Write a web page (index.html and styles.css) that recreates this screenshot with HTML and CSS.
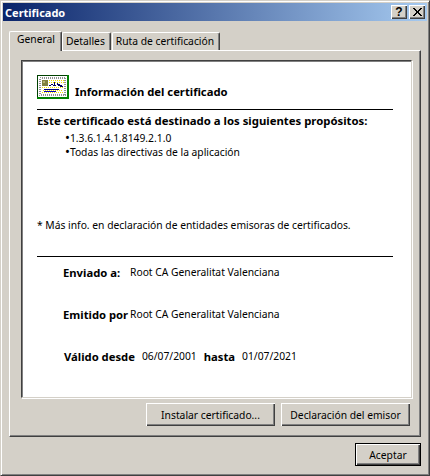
FILE: index.html
```html
<!DOCTYPE html>
<html lang="es">

<head>
    <meta charset="UTF-8">
    <meta name="viewport" content="width=device-width, initial-scale=1.0">
    <title>Certificado</title>
    <link rel="stylesheet" href="styles.css">
</head>

<body>
    <div class="window">
        <div class="titlebar">
            <span class="title">Certificado</span>
            <div class="caption-btns">
                <button class="caption help">?</button>
                <button class="caption close">
                    <svg width="9" height="8" viewBox="0 0 9 8" shape-rendering="crispEdges">
                        <path d="M0 0h2v1h1v1h1v1h1V2h1V1h1V0h2v1H8v1H7v1H6v2h1v1h1v1h1v1H7V7H6V6H5V5H4v1H3v1H2v1H0V7h1V6h1V5h1V3H2V2H1V1H0z" fill="#000"/>
                    </svg>
                </button>
            </div>
        </div>

        <div class="tabs">
            <div class="tab active">General</div>
            <div class="tab">Detalles</div>
            <div class="tab">Ruta de certificación</div>
        </div>

        <div class="panel">
            <div class="cert-box">
                <div class="cert-head">
                    <svg class="cert-icon" width="32" height="24" viewBox="0 0 32 24" shape-rendering="crispEdges">
                        <rect width="32" height="24" fill="#008000"/>
                        <rect width="30" height="1" fill="#004000"/>
                        <rect width="1" height="22" fill="#004000"/>
                        <rect x="1" y="1" width="29" height="21" fill="#fff"/>
                        <rect x="2.5" y="2.5" width="26" height="18" fill="none" stroke="#909090" stroke-dasharray="1 1"/>
                        <rect x="3.5" y="3.5" width="24" height="16" fill="none" stroke="#909090" stroke-dasharray="1 1" stroke-dashoffset="1"/>
                        <path d="M12 5.5h15M5 12.5h22M6 15.5h20M5 17.5h22M12 7.5h15" stroke="#f0e000" stroke-dasharray="1 1" fill="none"/>
                        <rect x="5" y="5" width="6" height="6" fill="#808040"/>
                        <rect x="6" y="6" width="2" height="2" fill="#b0b070"/>
                        <path d="M12 10h2V9h2v1h1V7h1v3h2V8h1v1h2v1h2v1h1v1h-3v-1h-2v-1h-2v1h-3v-1h-2v1h-2z" fill="#000060"/>
                        <rect x="7" y="14" width="15" height="1" fill="#000080"/>
                        <rect x="7" y="16" width="12" height="1" fill="#0000c0"/>
                    </svg>
                    <span class="bold">Información del certificado</span>
                </div>
                <div class="rule"></div>
                <div class="bold purpose-title">Este certificado está destinado a los siguientes propósitos:</div>
                <ul class="purposes">
                    <li>1.3.6.1.4.1.8149.2.1.0</li>
                    <li>Todas las directivas de la aplicación</li>
                </ul>
                <p class="note">* Más info. en declaración de entidades emisoras de certificados.</p>
                <div class="rule"></div>
                <div class="field"><span class="bold label">Enviado a:</span><span>Root CA Generalitat Valenciana</span></div>
                <div class="field"><span class="bold label">Emitido por</span><span>Root CA Generalitat Valenciana</span></div>
                <div class="field validity">
                    <span class="bold">Válido desde</span><span>06/07/2001</span><span class="bold">hasta</span><span>01/07/2021</span>
                </div>
            </div>
            <div class="panel-btns">
                <button class="btn wide">Instalar certificado...</button>
                <button class="btn wide">Declaración del emisor</button>
            </div>
        </div>

        <div class="footer">
            <button class="btn default">Aceptar</button>
        </div>
    </div>
</body>

</html>
```

FILE: styles.css
```css
* {
    box-sizing: border-box;
    padding: 0;
    margin: 0;
}

html,
body {
    height: 100%;
}

body {
    font-family: "Noto Sans", sans-serif;
    font-size: 10.3px;
    color: #000;
    background: #d4d0c8;
}

button {
    font: inherit;
    color: #000;
    background: #d4d0c8;
    border: none;
}

.bold {
    font-weight: bold;
    font-size: 11.25px;
}

.window {
    width: 430px;
    height: 476px;
    padding: 2px;
    background: #d4d0c8;
    border: 1px solid;
    border-color: #d4d0c8 #404040 #404040 #d4d0c8;
    box-shadow: inset 1px 1px 0 #fff, inset -1px -1px 0 #808080;
}

.titlebar {
    height: 18px;
    display: flex;
    align-items: center;
    justify-content: space-between;
    padding: 0 2px;
    background: linear-gradient(to right, #0a246a, #a6caf0);
}

.title {
    color: #fff;
    font-weight: bold;
    font-size: 11px;
}

.caption-btns {
    display: flex;
    gap: 2px;
}

.caption {
    width: 16px;
    height: 14px;
    display: flex;
    align-items: center;
    justify-content: center;
    font-family: "Liberation Sans", sans-serif;
    font-weight: bold;
    font-size: 12px;
    box-shadow: inset 1px 1px 0 #fff, inset -1px -1px 0 #404040, inset -2px -2px 0 #808080;
}

.tabs {
    display: flex;
    align-items: flex-end;
    height: 29px;
    padding-left: 6px;
}

.tab {
    height: 18px;
    line-height: 17px;
    padding: 0 5px 0 3px;
    margin-right: 1px;
    white-space: nowrap;
    border-top: 1px solid #fff;
    border-left: 1px solid #fff;
    border-right: 1px solid #404040;
    border-radius: 2px 2px 0 0;
    box-shadow: inset -1px 0 0 #808080;
}

.tab.active {
    height: 20px;
    line-height: 15px;
    padding: 0 6px 0 7px;
    margin-right: 0;
    margin-bottom: -1px;
    position: relative;
    z-index: 1;
    background: #d4d0c8;
}

.panel {
    width: 412px;
    height: 387px;
    margin-left: 6px;
    padding: 9px 10px 0 11px;
    border: 1px solid;
    border-color: #fff #404040 #404040 #fff;
    box-shadow: inset -1px -1px 0 #808080;
}

.cert-box {
    width: 391px;
    height: 338px;
    padding: 14px 18px 0 15px;
    background: #fff;
    border: 1px solid;
    border-color: #404040 #d4d0c8 #d4d0c8 #404040;
    box-shadow: inset 1px 1px 0 #808080, 1px 1px 0 #fff;
}

.cert-head {
    display: flex;
    align-items: flex-end;
    gap: 6px;
    height: 24px;
    margin-bottom: 10px;
}

.rule {
    height: 1px;
    background: #000;
}

.purpose-title {
    margin-top: 4px;
    line-height: 13px;
    font-size: 11.35px;
}

.purposes {
    list-style: none;
    margin-top: 4px;
    padding-left: 28px;
    line-height: 14px;
}

.purposes li::before {
    content: "•";
    font-size: 13px;
    line-height: 0;
}

.note {
    margin-top: 60px;
    line-height: 13px;
}

.note + .rule {
    margin-top: 24px;
}

.field {
    display: flex;
    margin-left: 26px;
    line-height: 13px;
    margin-top: 9px;
    margin-bottom: 29px;
}

.label {
    width: 67px;
}

.validity {
    margin-left: 27px;
    gap: 7px;
}

.panel-btns {
    display: flex;
    justify-content: flex-end;
    gap: 6px;
    margin-top: 5px;
}

.btn {
    height: 23px;
    box-shadow: inset 1px 1px 0 #fff, inset -1px -1px 0 #404040, inset -2px -2px 0 #808080;
}

.wide {
    width: 129px;
}

.footer {
    display: flex;
    justify-content: flex-end;
    margin-top: 6px;
    padding-right: 6px;
}

.default {
    width: 66px;
    height: 23px;
    border: 1px solid #000;
    box-shadow: inset 1px 1px 0 #fff, inset -1px -1px 0 #404040, inset -2px -2px 0 #808080;
}
```
